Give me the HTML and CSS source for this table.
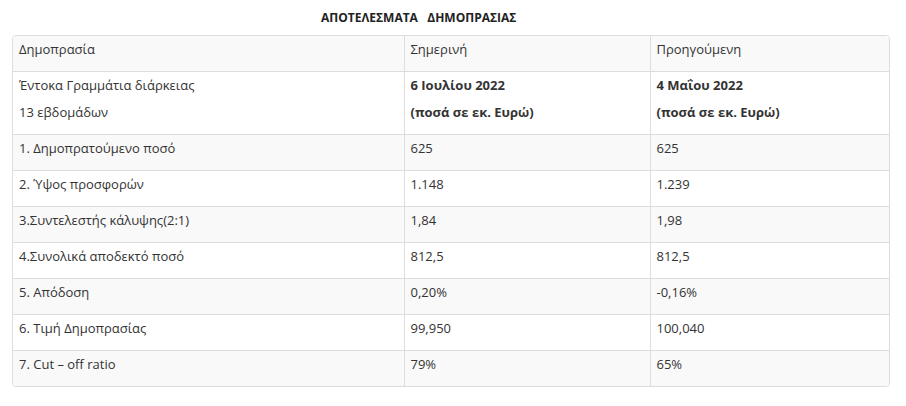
FILE: index.html
```html
<!DOCTYPE html>
<html lang="el">
<head>
<meta charset="utf-8">
<title>Αποτελέσματα Δημοπρασίας</title>
<link rel="stylesheet" href="styles.css">
</head>
<body>
<div class="page">
  <h2 class="title">ΑΠΟΤΕΛΕΣΜΑΤΑ&nbsp;&nbsp;&nbsp;ΔΗΜΟΠΡΑΣΙΑΣ</h2>
  <div class="table-wrap">
    <table class="results">
      <colgroup>
        <col class="c1"><col class="c2"><col class="c3">
      </colgroup>
      <tbody>
        <tr><td>Δημοπρασία</td><td>Σημερινή</td><td>Προηγούμενη</td></tr>
        <tr>
          <td><div class="lines"><span>Έντοκα Γραμμάτια διάρκειας</span><span>13 εβδομάδων</span></div></td>
          <td><div class="lines bold"><span>6 Ιουλίου 2022</span><span>(ποσά σε εκ. Ευρώ)</span></div></td>
          <td><div class="lines bold"><span>4 Μαΐου 2022</span><span>(ποσά σε εκ. Ευρώ)</span></div></td>
        </tr>
        <tr><td>1. Δημοπρατούμενο ποσό</td><td>625</td><td>625</td></tr>
        <tr><td>2. Ύψος προσφορών</td><td>1.148</td><td>1.239</td></tr>
        <tr><td>3.Συντελεστής κάλυψης(2:1)</td><td>1,84</td><td>1,98</td></tr>
        <tr><td>4.Συνολικά αποδεκτό ποσό</td><td>812,5</td><td>812,5</td></tr>
        <tr><td>5. Απόδοση</td><td>0,20%</td><td>-0,16%</td></tr>
        <tr><td>6. Τιμή Δημοπρασίας</td><td>99,950</td><td>100,040</td></tr>
        <tr><td>7. Cut – off ratio</td><td>79%</td><td>65%</td></tr>
      </tbody>
    </table>
  </div>
</div>
</body>
</html>
```
FILE: styles.css
```css
html, body {
  margin: 0;
  padding: 0;
  background: #fff;
}
body {
  font-family: "Open Sans", "Noto Sans", "DejaVu Sans", sans-serif;
  font-size: 13px;
  color: #333;
}
.page {
  padding: 0 16px 0 12px;
}
.title {
  margin: 0;
  height: 34px;
  padding-bottom: 1px;
  display: flex;
  align-items: center;
  padding-left: 309px;
  font-size: 12px;
  font-weight: 700;
  color: #222;
  letter-spacing: 0;
}
.table-wrap {
  width: 878px;
  border: 1px solid #ddd;
  border-radius: 4px;
  overflow: hidden;
  box-sizing: border-box;
}
.results {
  width: 100%;
  border-collapse: collapse;
  table-layout: fixed;
}
.c1 { width: 391px; }
.c2 { width: 246px; }
.c3 { width: auto; }
.results td {
  padding: 3px 6px 12px 6px;
  line-height: 20px;
  vertical-align: top;
  border-left: 1px solid #ddd;
  border-top: 1px solid #ddd;
}
.results tr:first-child td { border-top: 0; }
.results td:first-child { border-left: 0; }
.results tr:nth-child(odd) td { background: #f9f9f9; }
.lines {
  display: flex;
  flex-direction: column;
  gap: 7px;
}
.bold { font-weight: 700; }
```
